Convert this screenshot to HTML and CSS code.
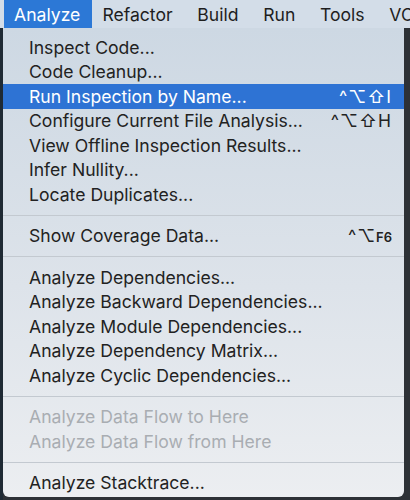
FILE: index.html
```html
<!DOCTYPE html>
<html>
<head>
<meta charset="utf-8">
<link rel="stylesheet" href="styles.css">
</head>
<body>
<div class="screen">
  <div class="menubar">
    <span class="mb-item active">Analyze</span>
    <span class="mb-item">Refactor</span>
    <span class="mb-item">Build</span>
    <span class="mb-item">Run</span>
    <span class="mb-item">Tools</span>
    <span class="mb-item">VCS</span>
  </div>
  <div class="below">
    <div class="menu">
      <div class="item"><span>Inspect Code...</span></div>
      <div class="item"><span>Code Cleanup...</span></div>
      <div class="item selected"><span>Run Inspection by Name...</span><span class="sc">^⌥⇧I</span></div>
      <div class="item"><span>Configure Current File Analysis...</span><span class="sc">^⌥⇧H</span></div>
      <div class="item"><span>View Offline Inspection Results...</span></div>
      <div class="item"><span>Infer Nullity...</span></div>
      <div class="item"><span>Locate Duplicates...</span></div>
      <div class="sep"></div>
      <div class="item"><span>Show Coverage Data...</span><span class="sc">^⌥<small>F6</small></span></div>
      <div class="sep"></div>
      <div class="item"><span>Analyze Dependencies...</span></div>
      <div class="item"><span>Analyze Backward Dependencies...</span></div>
      <div class="item"><span>Analyze Module Dependencies...</span></div>
      <div class="item"><span>Analyze Dependency Matrix...</span></div>
      <div class="item"><span>Analyze Cyclic Dependencies...</span></div>
      <div class="sep"></div>
      <div class="item disabled"><span>Analyze Data Flow to Here</span></div>
      <div class="item disabled"><span>Analyze Data Flow from Here</span></div>
      <div class="sep"></div>
      <div class="item"><span>Analyze Stacktrace...</span></div>
    </div>
  </div>
</div>
</body>
</html>
```
FILE: styles.css
```css
* { box-sizing: border-box; }
html, body { margin: 0; padding: 0; }
body {
  width: 410px;
  height: 500px;
  overflow: hidden;
  background: #2a3038;
  font-family: Inter, "Noto Sans", sans-serif;
  font-size: 17.6px;
  color: #222;
}
.screen { width: 410px; height: 500px; display: flex; flex-direction: column; }
.menubar {
  height: 28px;
  background: #d3dde8;
  display: flex;
  align-items: stretch;
  padding-left: 4px;
  white-space: nowrap;
  overflow: hidden;
}
.mb-item {
  display: flex;
  align-items: center;
  padding: 0 12px 0 10px;
  margin-right: 2.7px;
  color: #1e1e1e;
  font-size: 17.6px;
  flex: none;
}
.mb-item.active { background: #2c78d6; color: #fff; margin-right: 0; }
.below {
  flex: 1;
  display: flex;
  padding-left: 3px;
  padding-right: 6px;
  background: linear-gradient(90deg, #1f2a34 0 3px, transparent 3px), #2d3136;
}
.menu {
  flex: 1;
  height: 469px;
  background: linear-gradient(180deg, #cdd8e3 0%, #dde3ea 55%, #eceef1 100%);
  border-radius: 0 0 6px 6px;
  padding: 7px 0 4px;
  display: flex;
  flex-direction: column;
}
.item {
  height: 24.5px;
  flex: none;
  display: flex;
  align-items: center;
  justify-content: space-between;
  padding: 0 12px 0 26px;
  white-space: nowrap;
}
.item.selected { background: #2e73d4; color: #fff; }
.item.disabled { color: #a9adb2; }
.sc { font-size: 17.5px; letter-spacing: 1px; }
.sc small { font-size: 13px; font-weight: 600; letter-spacing: 0; }
.sep {
  flex: none;
  height: 1px;
  background: #c3c9d0;
  margin: 8px 0 8px;
}
```
